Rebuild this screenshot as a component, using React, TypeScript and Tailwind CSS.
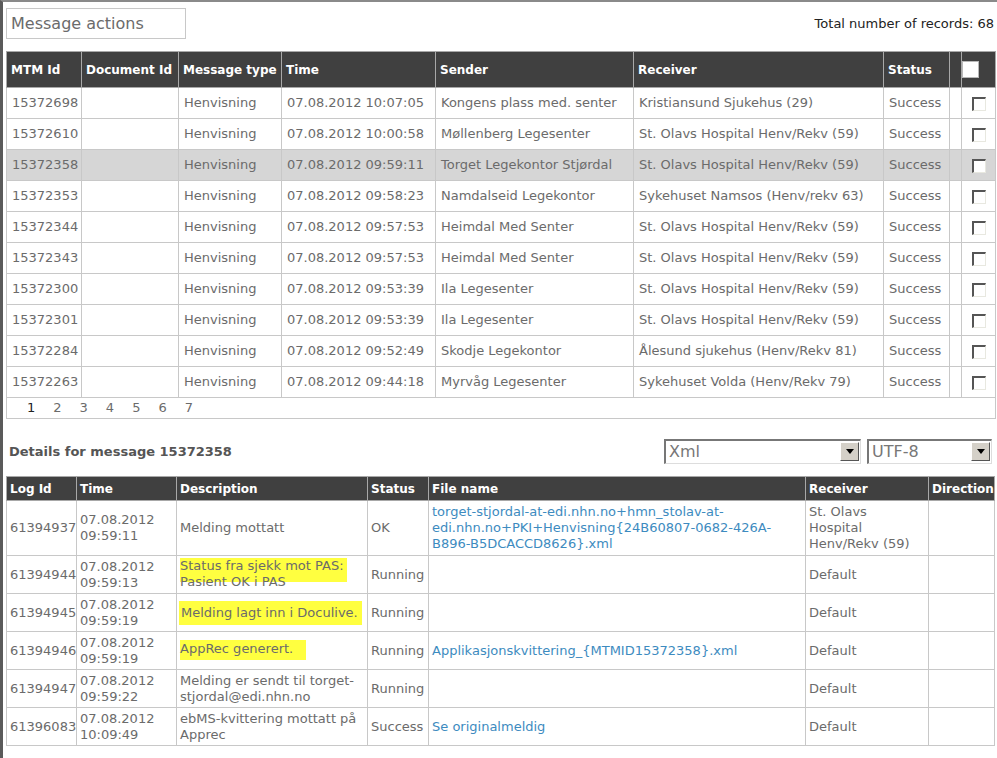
import React from "react"

const messages = [
  ["15372698", "07.08.2012 10:07:05", "Kongens plass med. senter", "Kristiansund Sjukehus (29)"],
  ["15372610", "07.08.2012 10:00:58", "Møllenberg Legesenter", "St. Olavs Hospital Henv/Rekv (59)"],
  ["15372358", "07.08.2012 09:59:11", "Torget Legekontor Stjørdal", "St. Olavs Hospital Henv/Rekv (59)"],
  ["15372353", "07.08.2012 09:58:23", "Namdalseid Legekontor", "Sykehuset Namsos (Henv/rekv 63)"],
  ["15372344", "07.08.2012 09:57:53", "Heimdal Med Senter", "St. Olavs Hospital Henv/Rekv (59)"],
  ["15372343", "07.08.2012 09:57:53", "Heimdal Med Senter", "St. Olavs Hospital Henv/Rekv (59)"],
  ["15372300", "07.08.2012 09:53:39", "Ila Legesenter", "St. Olavs Hospital Henv/Rekv (59)"],
  ["15372301", "07.08.2012 09:53:39", "Ila Legesenter", "St. Olavs Hospital Henv/Rekv (59)"],
  ["15372284", "07.08.2012 09:52:49", "Skodje Legekontor", "Ålesund sjukehus (Henv/Rekv 81)"],
  ["15372263", "07.08.2012 09:44:18", "Myrvåg Legesenter", "Sykehuset Volda (Henv/Rekv 79)"],
]

function Checkbox({ big }: { big?: boolean }) {
  if (big) {
    return <span className="inline-block w-[17px] h-[17px] bg-white border border-[#b8b8b8] align-middle" />
  }
  return (
    <span className="inline-block w-[14px] h-[14px] bg-white border-t-2 border-l-2 border-b border-r border-t-[#555] border-l-[#555] border-b-[#e8e8e0] border-r-[#e8e8e0] align-middle" />
  )
}

function Select({ value, width }: { value: string; width: string }) {
  return (
    <div className={`${width} h-[25px] flex border-t-2 border-l-2 border-b border-r border-t-[#777] border-l-[#777] border-b-[#ddd] border-r-[#ddd] bg-white`}>
      <span className="flex-1 pl-[3px] text-[16px] leading-[22px] text-[#777]">{value}</span>
      <span className="w-[19px] h-[19px] mt-px mr-px bg-[#d4d0c8] border-t border-l border-b border-r border-t-white border-l-white border-b-[#555] border-r-[#555] flex items-center justify-center">
        <svg width="8" height="5" viewBox="0 0 8 5">
          <path d="M0 0h8L4 5z" fill="#000" />
        </svg>
      </span>
    </div>
  )
}

function Highlight({ children, extra = "" }: { children: React.ReactNode; extra?: string }) {
  return <span className={`bg-[#ffff40] ${extra}`}>{children}</span>
}

export default function App() {
  const th = "border border-[#a8a8a8] text-left font-bold text-white"
  const td = "border border-[#c8c8c8] px-[5px] text-[#6b6b6b]"
  const cell = "border border-[#c8c8c8] px-[3px] align-middle"
  const td2 = `${cell} text-[#6b6b6b]`
  const link = `${cell} text-[#3d8bc0]`

  return (
    <div className="min-h-[758px] bg-white border-t-2 border-l-[3px] border-t-[#8a8a8a] border-l-[#5a5a5a] font-['DejaVu_Sans',Verdana,sans-serif] text-[13px] leading-[16px]">
      <div className="pl-[3px] pr-[2px] pt-[6px]">
        <div className="flex items-center justify-between">
          <div className="w-[180px] h-[31px] border border-[#c8c8c8] pl-[4px] flex items-center text-[16px] text-[#6b6b6b]">
            Message actions
          </div>
          <div className="text-[#222] pr-px">Total number of records: 68</div>
        </div>

        <table className="mt-[12px] w-[989px] border-collapse table-fixed">
          <colgroup>
            <col className="w-[75px]" />
            <col className="w-[97px]" />
            <col className="w-[103px]" />
            <col className="w-[154px]" />
            <col className="w-[198px]" />
            <col className="w-[250px]" />
            <col className="w-[66px]" />
            <col className="w-[12px]" />
            <col className="w-[34px]" />
          </colgroup>
          <thead>
            <tr className="h-[36px] bg-[#404040] text-[12px]">
              <th className={`${th} pl-[4px]`}>MTM Id</th>
              <th className={`${th} pl-[4px]`}>Document Id</th>
              <th className={`${th} pl-[4px]`}>Message type</th>
              <th className={`${th} pl-[4px]`}>Time</th>
              <th className={`${th} pl-[4px]`}>Sender</th>
              <th className={`${th} pl-[4px]`}>Receiver</th>
              <th className={`${th} pl-[4px]`}>Status</th>
              <th className={th}></th>
              <th className={`${th} text-center`}>
                <Checkbox big />
              </th>
            </tr>
          </thead>
          <tbody>
            {messages.map((m) => (
              <tr key={m[0]} className={`h-[31px] ${m[0] === "15372358" ? "bg-[#d6d6d6]" : ""}`}>
                <td className={td}>{m[0]}</td>
                <td className={td}></td>
                <td className={td}>Henvisning</td>
                <td className={`${td} whitespace-nowrap`}>{m[1]}</td>
                <td className={`${td} whitespace-nowrap overflow-hidden`}>{m[2]}</td>
                <td className={`${td} whitespace-nowrap`}>{m[3]}</td>
                <td className={td}>Success</td>
                <td className={td}></td>
                <td className={`${td} text-center`}>
                  <Checkbox />
                </td>
              </tr>
            ))}
            <tr className="h-[21px]">
              <td colSpan={9} className="border border-[#c8c8c8] pl-[20px]">
                <div className="flex gap-[18px] text-[#6b6b6b]">
                  <span className="text-[#222]">1</span>
                  <span>2</span>
                  <span>3</span>
                  <span>4</span>
                  <span>5</span>
                  <span>6</span>
                  <span>7</span>
                </div>
              </td>
            </tr>
          </tbody>
        </table>

        <div className="mt-[20px] flex items-center justify-between">
          <div className="pl-[3px] font-bold text-[#555]">Details for message 15372358</div>
          <div className="flex gap-[6px] pr-[3px]">
            <Select value="Xml" width="w-[197px]" />
            <Select value="UTF-8" width="w-[125px]" />
          </div>
        </div>

        <table className="mt-[12px] w-[988px] border-collapse table-fixed">
          <colgroup>
            <col className="w-[70px]" />
            <col className="w-[100px]" />
            <col className="w-[191px]" />
            <col className="w-[61px]" />
            <col className="w-[377px]" />
            <col className="w-[123px]" />
            <col className="w-[66px]" />
          </colgroup>
          <thead>
            <tr className="h-[24px] bg-[#404040] text-[12px]">
              <th className={`${th} pl-[3px]`}>Log Id</th>
              <th className={`${th} pl-[3px]`}>Time</th>
              <th className={`${th} pl-[3px]`}>Description</th>
              <th className={`${th} pl-[3px]`}>Status</th>
              <th className={`${th} pl-[3px]`}>File name</th>
              <th className={`${th} pl-[3px]`}>Receiver</th>
              <th className={`${th} pl-[3px]`}>Direction</th>
            </tr>
          </thead>
          <tbody>
            <tr className="h-[55px]">
              <td className={td2}>61394937</td>
              <td className={td2}>07.08.2012 09:59:11</td>
              <td className={td2}>Melding mottatt</td>
              <td className={td2}>OK</td>
              <td className={link}>
                torget-stjordal-at-edi.nhn.no+hmn_stolav-at-edi.nhn.no+PKI+Henvisning{"{"}24B60807-0682-426A-B896-B5DCACCD8626{"}"}.xml
              </td>
              <td className={td2}>
                St. Olavs
                <br />
                Hospital
                <br />
                Henv/Rekv (59)
              </td>
              <td className={td2}></td>
            </tr>
            <tr className="h-[38px]">
              <td className={td2}>61394944</td>
              <td className={td2}>07.08.2012 09:59:13</td>
              <td className={td2}>
                <div className="w-[167px] bg-[linear-gradient(#ffff40_0,#ffff40_72%,transparent_72%)] pb-[2px]">
                  Status fra sjekk mot PAS: Pasient OK i PAS
                </div>
              </td>
              <td className={td2}>Running</td>
              <td className={td2}></td>
              <td className={td2}>Default</td>
              <td className={td2}></td>
            </tr>
            <tr className="h-[38px]">
              <td className={td2}>61394945</td>
              <td className={td2}>07.08.2012 09:59:19</td>
              <td className={td2}>
                <Highlight extra="inline-block py-[4px] pl-[2px] pr-[4px] -ml-[1px]">Melding lagt inn i Doculive.</Highlight>
              </td>
              <td className={td2}>Running</td>
              <td className={td2}></td>
              <td className={td2}>Default</td>
              <td className={td2}></td>
            </tr>
            <tr className="h-[38px]">
              <td className={td2}>61394946</td>
              <td className={td2}>07.08.2012 09:59:19</td>
              <td className={td2}>
                <Highlight extra="inline-block pt-[1px] pb-[3px] pr-[13px] -mt-[4px]">AppRec generert.</Highlight>
              </td>
              <td className={td2}>Running</td>
              <td className={link}>Applikasjonskvittering_{"{"}MTMID15372358{"}"}.xml</td>
              <td className={td2}>Default</td>
              <td className={td2}></td>
            </tr>
            <tr className="h-[38px]">
              <td className={td2}>61394947</td>
              <td className={td2}>07.08.2012 09:59:22</td>
              <td className={td2}>Melding er sendt til torget-stjordal@edi.nhn.no</td>
              <td className={td2}>Running</td>
              <td className={td2}></td>
              <td className={td2}>Default</td>
              <td className={td2}></td>
            </tr>
            <tr className="h-[38px]">
              <td className={td2}>61396083</td>
              <td className={td2}>07.08.2012 10:09:49</td>
              <td className={td2}>ebMS-kvittering mottatt på Apprec</td>
              <td className={td2}>Success</td>
              <td className={link}>Se originalmeldig</td>
              <td className={td2}>Default</td>
              <td className={td2}></td>
            </tr>
          </tbody>
        </table>
      </div>
    </div>
  )
}
